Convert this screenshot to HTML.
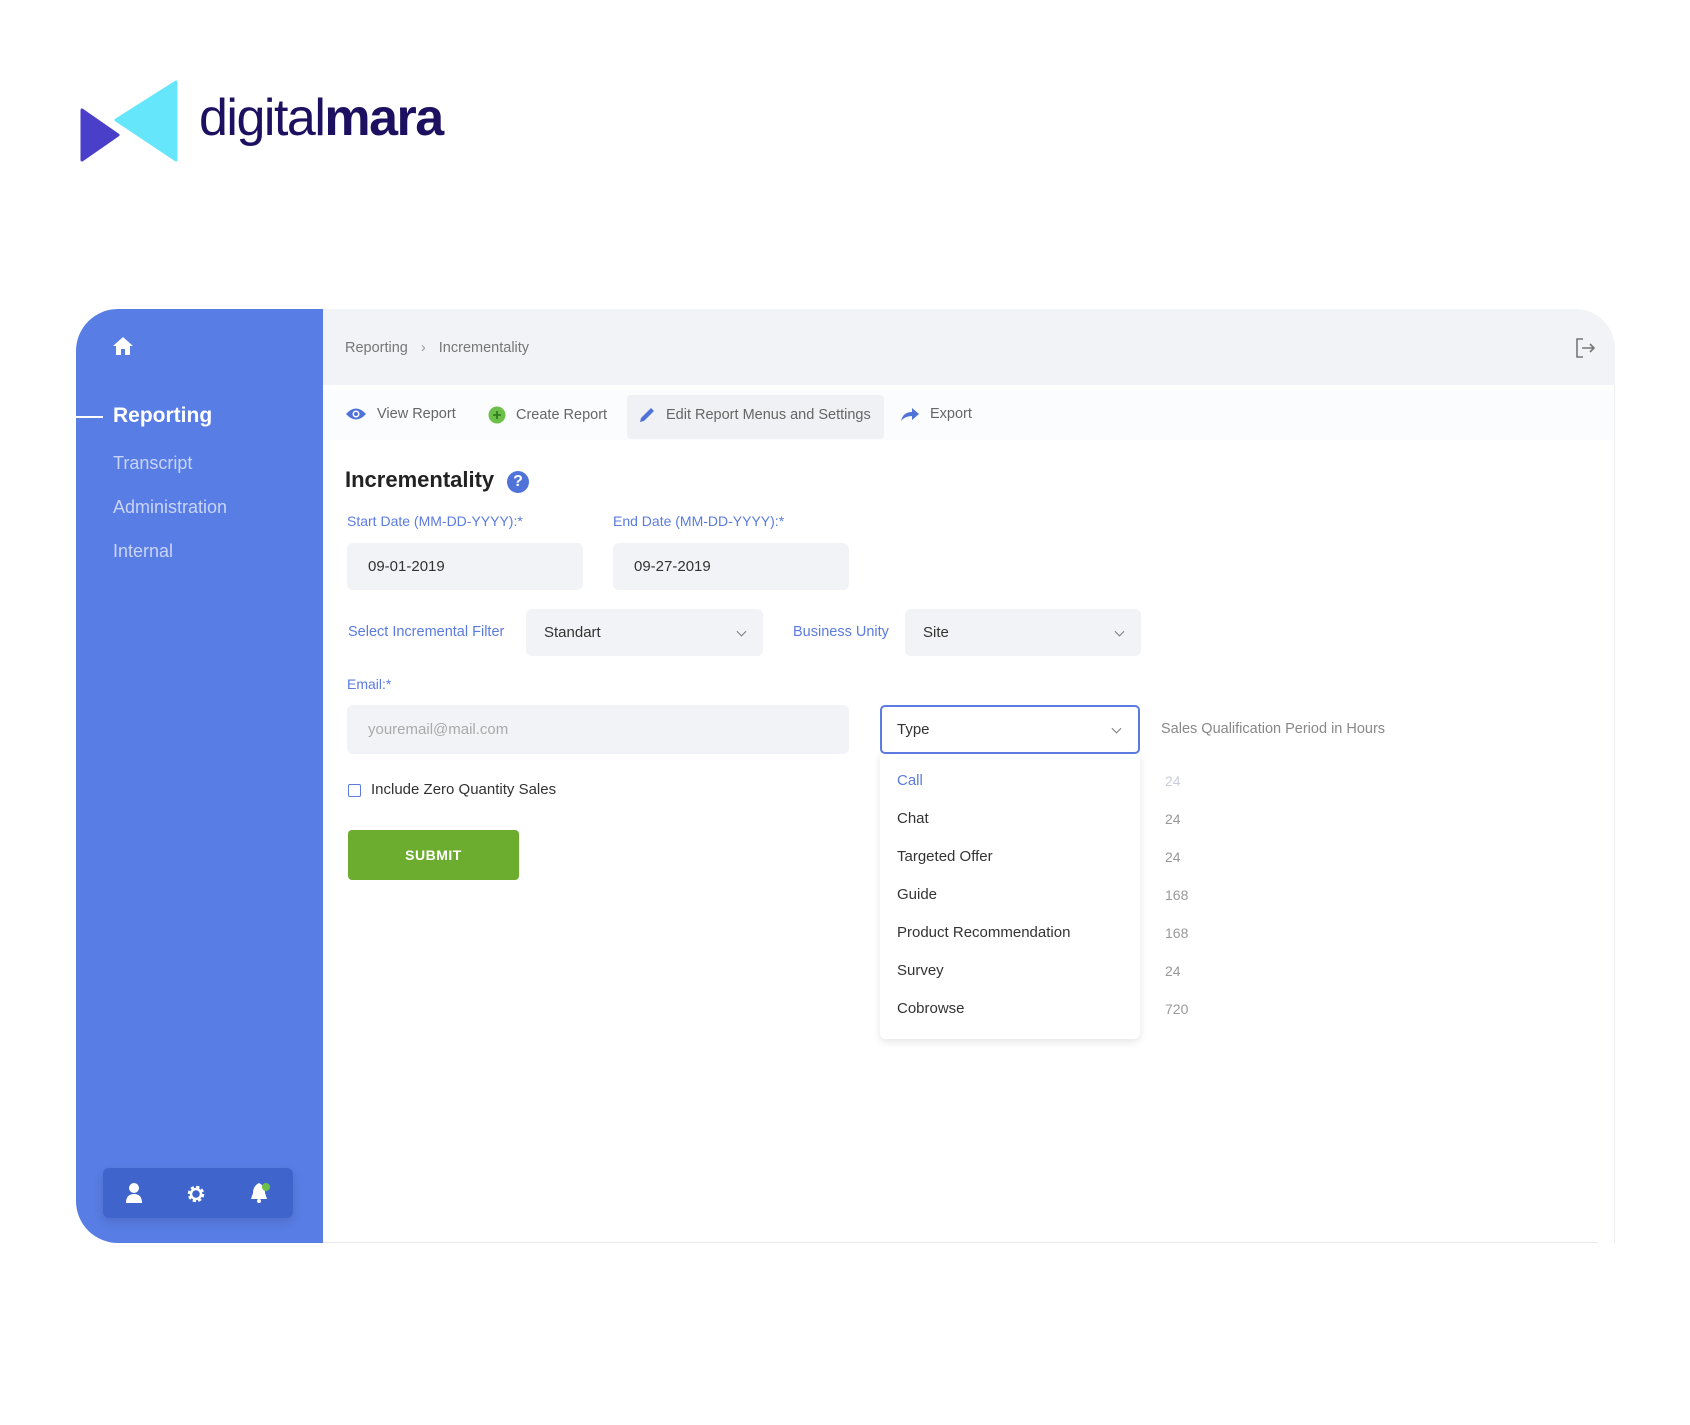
<!DOCTYPE html>
<html><head><meta charset="utf-8"><style>
*{box-sizing:border-box;margin:0;padding:0}
body{width:1690px;height:1425px;background:#fff;position:relative;font-family:"Liberation Sans",sans-serif;overflow:hidden}
.a{position:absolute}
.side{left:76px;top:309px;width:247px;height:934px;background:#587de4;border-radius:42px 0 0 42px}
.main{left:323px;top:309px;width:1300px;height:934px;background:#fff;border-right:1px solid #eceef2;border-radius:0 40px 0 0}
.hdr{left:323px;top:309px;width:1300px;height:76px;background:#f2f3f7;border-radius:0 40px 0 0}
.nav{color:#fff;font-size:18px;left:113px;color:#c9d4f7}
.lbl{font-size:14px;color:#5b7be0}
.inp{background:#f2f3f7;border-radius:6px;font-size:15px;color:#333;padding-left:21px;display:flex;align-items:center}
.tab{font-size:14.5px;color:#666;top:406px;display:flex;align-items:center;gap:10px}
.dd{font-size:15px;color:#333;left:897px}
.num{font-size:14px;color:#999;left:1165px}
.chev{position:absolute;right:18px;top:50%;width:7px;height:7px;border-right:1px solid #777;border-bottom:1px solid #777;transform:translateY(-70%) rotate(45deg)}
</style></head><body>
<svg class="a" style="left:80px;top:80px" width="100" height="82" viewBox="0 0 100 82">
<path d="M2 30 L2 80 L38 55 Z" fill="#4a3fc8" stroke="#4a3fc8" stroke-width="3" stroke-linejoin="round"/>
<path d="M96 2 L96 80 L36 40 Z" fill="#66e6fb" stroke="#66e6fb" stroke-width="3" stroke-linejoin="round"/>
</svg>
<div class="a" style="left:199px;top:88px;font-size:52px;color:#1e1060;letter-spacing:-1.5px">digital<b>mara</b></div>

<div class="a side"></div>
<div class="a main" style="width:1292px"></div>
<div class="a hdr" style="width:1292px"></div>
<div class="a" style="left:323px;top:1242px;width:1275px;height:1px;background:#e8e8ec"></div>

<svg class="a" style="left:112px;top:336px" width="22" height="20" viewBox="0 0 22 20"><path d="M11 1 L21 10 L18 10 L18 19 L13 19 L13 13 L9 13 L9 19 L4 19 L4 10 L1 10 Z" fill="#fff"/></svg>
<div class="a" style="left:76px;top:416px;width:27px;height:2px;background:#fff"></div>
<div class="a" style="left:113px;top:404px;font-size:21px;font-weight:bold;color:#fff">Reporting</div>
<div class="a nav" style="top:453px">Transcript</div>
<div class="a nav" style="top:497px">Administration</div>
<div class="a nav" style="top:541px">Internal</div>
<div class="a" style="left:103px;top:1168px;width:190px;height:50px;background:#3f64cc;border-radius:6px;box-shadow:0 4px 10px rgba(0,0,0,.12)"></div>
<svg class="a" style="left:125px;top:1182px" width="18" height="22" viewBox="0 0 18 22"><circle cx="9" cy="6" r="5" fill="#fff"/><path d="M1 21 Q1 12 9 12 Q17 12 17 21 Z" fill="#fff"/></svg>
<svg class="a" style="left:185px;top:1183px" width="22" height="22" viewBox="0 0 22 22"><circle cx="11" cy="11" r="6.5" fill="none" stroke="#fff" stroke-width="3.5" stroke-dasharray="3 2.1"/><circle cx="11" cy="11" r="5" fill="none" stroke="#fff" stroke-width="2.5"/></svg>
<svg class="a" style="left:249px;top:1181px" width="24" height="24" viewBox="0 0 24 24"><path d="M10 2 Q4 5 4 12 L2 18 L18 18 L16 12 Q16 5 10 2Z" fill="#fff"/><circle cx="10" cy="20" r="2" fill="#fff"/><circle cx="17" cy="6" r="4" fill="#6cc04a"/></svg>

<div class="a" style="left:345px;top:340px;font-size:14.5px;color:#777">Reporting <span style="margin:0 9px;color:#999">›</span> Incrementality</div>
<svg class="a" style="left:1574px;top:337px" width="22" height="22" viewBox="0 0 22 22" fill="none" stroke="#777" stroke-width="1.6"><path d="M9 2 H3 V20 H9"/><path d="M8 11 H20 M16 7 L20 11 L16 15"/></svg>

<div class="a" style="left:323px;top:390px;width:1290px;height:50px;background:#fbfcfd"></div>
<div class="a" style="left:627px;top:395px;width:257px;height:44px;background:#f0f1f5;border-radius:4px"></div>
<div class="a tab" style="left:345px"><svg width="22" height="14" viewBox="0 0 22 14"><path d="M1 7 Q11 -4 21 7 Q11 18 1 7Z" fill="#4f73d9"/><circle cx="11" cy="7" r="3.5" fill="#fff"/><circle cx="11" cy="7" r="2" fill="#4f73d9"/></svg>View Report</div>
<div class="a tab" style="left:488px"><svg width="18" height="18" viewBox="0 0 18 18"><circle cx="9" cy="9" r="8.5" fill="#6cc04a"/><path d="M9 5V13M5 9H13" stroke="#2e7d1e" stroke-width="1.8"/></svg>Create Report</div>
<div class="a tab" style="left:638px"><svg width="18" height="18" viewBox="0 0 18 18"><path d="M2 16 L3 12 L13 2 L16 5 L6 15 Z" fill="#4f73d9"/></svg>Edit Report Menus and Settings</div>
<div class="a tab" style="left:900px"><svg width="20" height="16" viewBox="0 0 20 16"><path d="M1 15 Q3 6 12 6 L12 2 L19 8 L12 14 L12 10 Q5 10 1 15Z" fill="#4f73d9"/></svg>Export</div>

<div class="a" style="left:345px;top:467px;font-size:22px;font-weight:bold;color:#222">Incrementality</div>
<div class="a" style="left:507px;top:471px;width:22px;height:22px;border-radius:50%;background:#4f73d9;color:#fff;font-size:16px;font-weight:bold;text-align:center;line-height:22px">?</div>

<div class="a lbl" style="left:347px;top:513px">Start Date (MM-DD-YYYY):*</div>
<div class="a lbl" style="left:613px;top:513px">End Date (MM-DD-YYYY):*</div>
<div class="a inp" style="left:347px;top:543px;width:236px;height:47px">09-01-2019</div>
<div class="a inp" style="left:613px;top:543px;width:236px;height:47px">09-27-2019</div>

<div class="a lbl" style="left:348px;top:624px;font-size:14.5px">Select Incremental Filter</div>
<div class="a inp" style="left:526px;top:609px;width:237px;height:47px;padding-left:18px">Standart<span class="chev"></span></div>
<div class="a lbl" style="left:793px;top:624px;font-size:14.5px">Business Unity</div>
<div class="a inp" style="left:905px;top:609px;width:236px;height:47px;padding-left:18px">Site<span class="chev"></span></div>

<div class="a lbl" style="left:347px;top:676px">Email:*</div>
<div class="a inp" style="left:347px;top:705px;width:502px;height:49px;color:#aaa">youremail@mail.com</div>
<div class="a" style="left:348px;top:784px;width:13px;height:13px;border:1.5px solid #5b7be0;border-radius:2px"></div>
<div class="a" style="left:371px;top:781px;font-size:15px;color:#333">Include Zero Quantity Sales</div>
<div class="a" style="left:348px;top:830px;width:171px;height:50px;background:#6cad2f;border-radius:4px;color:#fff;font-size:14px;font-weight:bold;text-align:center;line-height:50px;letter-spacing:.5px">SUBMIT</div>

<div class="a" style="left:880px;top:753px;width:260px;height:286px;background:#fff;border-radius:0 0 6px 6px;box-shadow:0 3px 8px rgba(0,0,0,.1)"></div>
<div class="a inp" style="left:880px;top:705px;width:260px;height:49px;background:#fff;border:2px solid #5b7be0;border-radius:5px;padding-left:15px">Type<span class="chev"></span></div>
<div class="a" style="left:1161px;top:721px;font-size:14.5px;color:#888">Sales Qualification Period in Hours</div>
<div class="a dd" style="top:772px;color:#5b7be0">Call</div>
<div class="a dd" style="top:810px">Chat</div>
<div class="a dd" style="top:848px">Targeted Offer</div>
<div class="a dd" style="top:886px">Guide</div>
<div class="a dd" style="top:924px">Product Recommendation</div>
<div class="a dd" style="top:962px">Survey</div>
<div class="a dd" style="top:1000px">Cobrowse</div>
<div class="a num" style="top:773px;color:#ccd">24</div>
<div class="a num" style="top:811px">24</div>
<div class="a num" style="top:849px">24</div>
<div class="a num" style="top:887px">168</div>
<div class="a num" style="top:925px">168</div>
<div class="a num" style="top:963px">24</div>
<div class="a num" style="top:1001px">720</div>
</body></html>
